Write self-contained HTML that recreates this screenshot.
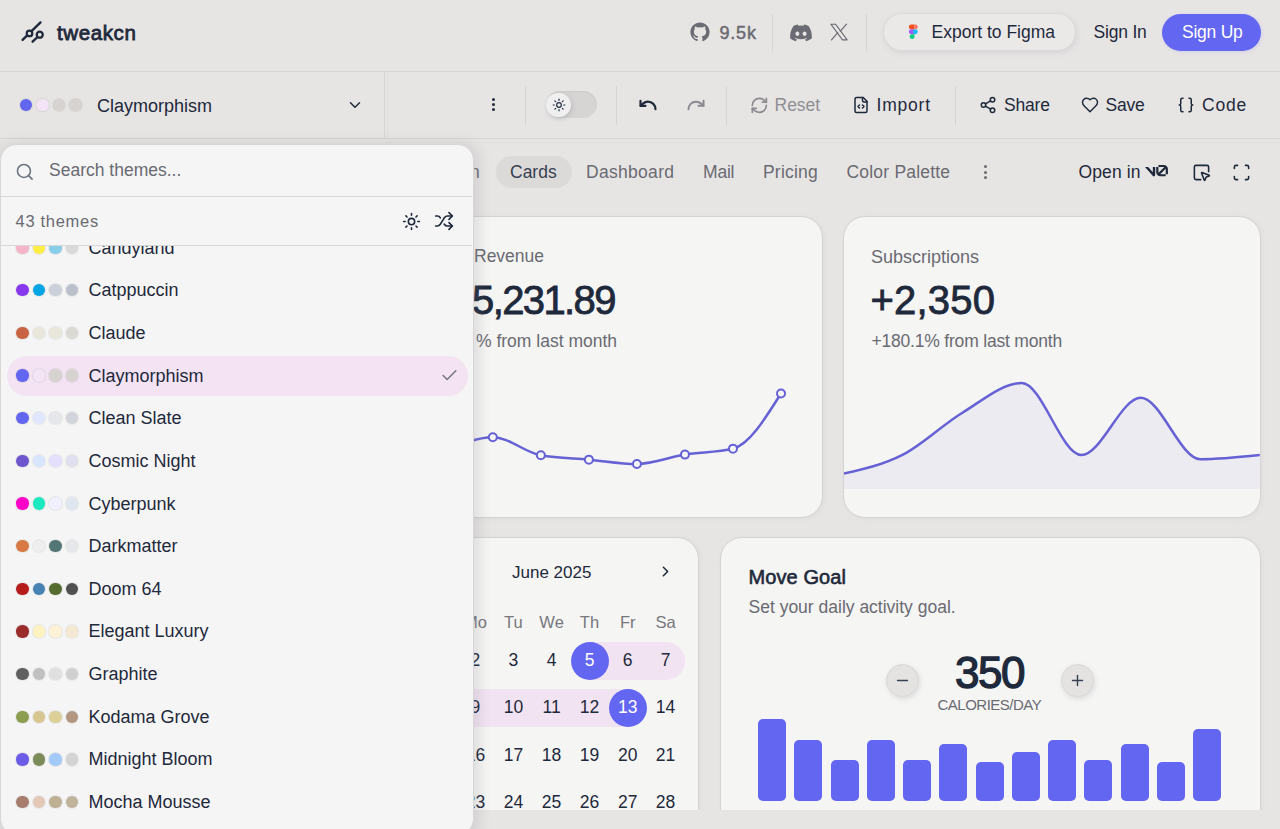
<!DOCTYPE html>
<html><head><meta charset="utf-8"><style>
html,body{margin:0;padding:0;}
body{width:1280px;height:829px;overflow:hidden;position:relative;background:#e7e5e4;font-family:"Liberation Sans", sans-serif;}
.t{position:absolute;line-height:1;white-space:nowrap;}
.dot{position:absolute;border-radius:50%;box-shadow:0 0 0 1px rgba(0,0,0,0.06);}
svg{overflow:visible}
</style></head><body>
<div style="position:absolute;left:0px;top:71px;width:1280px;height:1px;background:#d6d3d1"></div>
<svg style="position:absolute;left:0px;top:0px;" width="60" height="60" viewBox="0 0 60 60" fill="none"><g stroke="#1e293b" stroke-width="2.4" stroke-linecap="round"><line x1="22.6" y1="39.9" x2="40.5" y2="22.4"/><line x1="32.6" y1="41.7" x2="37" y2="37.5"/></g><circle cx="29.5" cy="33.4" r="2.8" stroke="#1e293b" stroke-width="2.2" fill="#e7e5e4"/><circle cx="39.75" cy="34.7" r="3" stroke="#1e293b" stroke-width="2.3" fill="#e7e5e4"/></svg>
<div class="t" style="left:57.0px;top:22.6px;font-size:20.5px;color:#1e293b;font-weight:400;letter-spacing:0.6px;-webkit-text-stroke:0.8px #1e293b">tweakcn</div>
<svg style="position:absolute;left:690px;top:22px;" width="20" height="20" viewBox="0 0 24 24" fill="none"><path fill="#6b6b73" d="M12 .5C5.65.5.5 5.65.5 12c0 5.08 3.29 9.39 7.86 10.91.58.1.79-.25.79-.56v-2c-3.2.7-3.87-1.37-3.87-1.37-.52-1.33-1.28-1.69-1.28-1.69-1.04-.71.08-.7.08-.7 1.15.08 1.76 1.18 1.76 1.18 1.03 1.76 2.69 1.25 3.35.96.1-.74.4-1.25.73-1.54-2.55-.29-5.24-1.28-5.24-5.68 0-1.26.45-2.28 1.18-3.09-.12-.29-.51-1.46.11-3.04 0 0 .97-.31 3.17 1.18a11 11 0 0 1 5.77 0c2.2-1.49 3.17-1.18 3.17-1.18.63 1.58.23 2.75.11 3.04.74.81 1.18 1.83 1.18 3.09 0 4.41-2.69 5.38-5.25 5.67.41.36.78 1.06.78 2.14v3.17c0 .31.21.67.8.56C20.21 21.38 23.5 17.08 23.5 12 23.5 5.65 18.35.5 12 .5z"/></svg>
<div class="t" style="left:719.5px;top:23.8px;font-size:18px;color:#6b6b73;font-weight:400;letter-spacing:0.8px;-webkit-text-stroke:0.5px #6b6b73">9.5k</div>
<div style="position:absolute;left:772px;top:14px;width:1px;height:37px;background:#d6d3d1"></div>
<svg style="position:absolute;left:788px;top:22px;" width="26" height="20" viewBox="0 0 24 22" fill="none"><path fill="#6b6b73" d="M20.32 4.37a19.8 19.8 0 0 0-4.89-1.52.07.07 0 0 0-.08.04c-.21.38-.44.86-.61 1.25a18.3 18.3 0 0 0-5.49 0 12.6 12.6 0 0 0-.62-1.25.08.08 0 0 0-.08-.04 19.7 19.7 0 0 0-4.88 1.52.07.07 0 0 0-.03.03C.53 9.05-.32 13.58.1 18.06a.08.08 0 0 0 .03.05 19.9 19.9 0 0 0 5.99 3.03.08.08 0 0 0 .08-.03c.46-.63.87-1.3 1.23-1.99a.08.08 0 0 0-.04-.11 13.1 13.1 0 0 1-1.87-.89.08.08 0 0 1-.01-.13l.37-.29a.07.07 0 0 1 .08-.01c3.93 1.79 8.18 1.79 12.07 0a.07.07 0 0 1 .08.01l.37.29a.08.08 0 0 1-.01.13 12.3 12.3 0 0 1-1.87.89.08.08 0 0 0-.04.11c.36.7.77 1.36 1.22 1.99a.08.08 0 0 0 .08.03 19.8 19.8 0 0 0 6-3.03.08.08 0 0 0 .03-.05c.5-5.18-.84-9.67-3.55-13.66a.06.06 0 0 0-.03-.03zM8.02 15.33c-1.18 0-2.16-1.09-2.16-2.42 0-1.33.96-2.42 2.16-2.42 1.21 0 2.18 1.1 2.16 2.42 0 1.33-.96 2.42-2.16 2.42zm7.97 0c-1.18 0-2.16-1.09-2.16-2.42 0-1.33.96-2.42 2.16-2.42 1.21 0 2.18 1.1 2.16 2.42 0 1.33-.95 2.42-2.16 2.42z"/></svg>
<svg style="position:absolute;left:829px;top:22px;" width="20" height="20" viewBox="0 0 24 24" fill="none"><path fill="none" stroke="#6b6b73" stroke-width="1.3" stroke-linejoin="round" d="M2.2 2.6h5.6l14 18.8h-5.6z"/><path stroke="#6b6b73" stroke-width="1.5" stroke-linecap="round" d="M21 2.6 13.6 11M3 21.4l7.5-8.6"/></svg>
<div style="position:absolute;left:866px;top:14px;width:1px;height:37px;background:#d6d3d1"></div>
<div style="position:absolute;left:884px;top:14px;width:191px;height:36px;border-radius:18px;background:#ebe9e8;box-shadow:0 0 0 1px #dcdad8, 1px 2px 6px rgba(140,140,150,0.25)"></div>
<svg style="position:absolute;left:908px;top:24.3px;" width="10.6" height="15.6" viewBox="0 0 13 18" fill="none"><path fill="#f24e1e" d="M4 0h4v6H4a3 3 0 0 1 0-6z"/><path fill="#ff7262" d="M8 0h1a3 3 0 0 1 0 6H8z"/><path fill="#a259ff" d="M4 6h4v6H4a3 3 0 0 1 0-6z"/><circle fill="#1abcfe" cx="9" cy="9" r="3"/><path fill="#0acf83" d="M4 12h4v3a3 3 0 1 1-4-3z"/></svg>
<div class="t" style="left:931.5px;top:23.8px;font-size:17.5px;color:#1e293b;font-weight:400;letter-spacing:0px;">Export to Figma</div>
<div class="t" style="left:1093.5px;top:23.8px;font-size:17.5px;color:#1e293b;font-weight:400;letter-spacing:-0.2px;">Sign In</div>
<div style="position:absolute;left:1162px;top:14px;width:99px;height:37px;border-radius:19px;background:#6366f1;box-shadow:1px 1px 4px rgba(99,102,241,0.15)"></div>
<div class="t" style="left:1182.0px;top:23.8px;font-size:17.5px;color:#ffffff;font-weight:400;letter-spacing:-0.25px;">Sign Up</div>
<div style="position:absolute;left:0px;top:138px;width:1280px;height:1px;background:#d6d3d1"></div>
<div style="position:absolute;left:385px;top:142px;width:895px;height:1px;background:#e2e0de"></div>
<div style="position:absolute;left:383.5px;top:72px;width:1px;height:66px;background:#d6d3d1"></div>
<div style="position:absolute;left:387px;top:72px;width:1px;height:66px;background:#dedcda"></div>
<div class="dot" style="left:19.7px;top:98.5px;width:12.6px;height:12.6px;background:#6366f1"></div>
<div class="dot" style="left:36.2px;top:98.5px;width:12.6px;height:12.6px;background:#f3e5f5"></div>
<div class="dot" style="left:52.7px;top:98.5px;width:12.6px;height:12.6px;background:#d6d3d1"></div>
<div class="dot" style="left:69.2px;top:98.5px;width:12.6px;height:12.6px;background:#d6d3d1"></div>
<div class="t" style="left:97.0px;top:96.8px;font-size:18px;color:#1e293b;font-weight:400;letter-spacing:0px;">Claymorphism</div>
<svg style="position:absolute;left:346px;top:96px" width="18" height="18" viewBox="0 0 24 24" fill="none" stroke="#1e293b" stroke-width="2" stroke-linecap="round" stroke-linejoin="round"><path d="m6 9 6 6 6-6"/></svg>
<div style="position:absolute;left:492px;top:97.9px;width:3.2px;height:3.2px;border-radius:50%;background:#1e293b"></div>
<div style="position:absolute;left:492px;top:102.9px;width:3.2px;height:3.2px;border-radius:50%;background:#1e293b"></div>
<div style="position:absolute;left:492px;top:107.9px;width:3.2px;height:3.2px;border-radius:50%;background:#1e293b"></div>
<div style="position:absolute;left:525px;top:86px;width:1px;height:39px;background:#d6d3d1"></div>
<div style="position:absolute;left:545.5px;top:91px;width:51.5px;height:27px;border-radius:14px;background:#d7d5d4;box-shadow:inset 0 1px 2px rgba(0,0,0,0.05)"></div>
<div style="position:absolute;left:546.2px;top:92.5px;width:24.5px;height:24.5px;border-radius:50%;background:#efefef;box-shadow:1px 2px 4px rgba(100,100,110,0.25)"></div>
<svg style="position:absolute;left:551.5px;top:97.8px" width="14" height="14" viewBox="0 0 24 24" fill="none" stroke="#1e293b" stroke-width="2" stroke-linecap="round" stroke-linejoin="round"><circle cx="12" cy="12" r="4"/><path d="M12 2v2"/><path d="M12 20v2"/><path d="m4.93 4.93 1.41 1.41"/><path d="m17.66 17.66 1.41 1.41"/><path d="M2 12h2"/><path d="M20 12h2"/><path d="m6.34 17.66-1.41 1.41"/><path d="m19.07 4.93-1.41 1.41"/></svg>
<div style="position:absolute;left:616px;top:86px;width:1px;height:39px;background:#d6d3d1"></div>
<svg style="position:absolute;left:638.3px;top:94.5px" width="20" height="20" viewBox="0 0 24 24" fill="none" stroke="#1e293b" stroke-width="2.6" stroke-linecap="round" stroke-linejoin="round"><path d="M3 7v6h6"/><path d="M21 17a9 9 0 0 0-9-9 9 9 0 0 0-6 2.3L3 13"/></svg>
<svg style="position:absolute;left:685.5px;top:94.5px" width="20" height="20" viewBox="0 0 24 24" fill="none" stroke="#8a8a8e" stroke-width="2.4" stroke-linecap="round" stroke-linejoin="round"><path d="M21 7v6h-6"/><path d="M3 17a9 9 0 0 1 9-9 9 9 0 0 1 6 2.3l3 2.7"/></svg>
<div style="position:absolute;left:726px;top:86px;width:1px;height:39px;background:#d6d3d1"></div>
<svg style="position:absolute;left:750.3px;top:95.5px" width="18.7" height="18.7" viewBox="0 0 24 24" fill="none" stroke="#8c8c90" stroke-width="2.2" stroke-linecap="round" stroke-linejoin="round"><path d="M3 12a9 9 0 0 1 9-9 9.75 9.75 0 0 1 6.74 2.74L21 8"/><path d="M21 3v5h-5"/><path d="M21 12a9 9 0 0 1-9 9 9.75 9.75 0 0 1-6.74-2.74L3 16"/><path d="M8 16H3v5"/></svg>
<div class="t" style="left:774.5px;top:97.2px;font-size:17.5px;color:#8f8f93;font-weight:400;letter-spacing:0px;">Reset</div>
<svg style="position:absolute;left:852px;top:96px" width="18" height="18" viewBox="0 0 24 24" fill="none" stroke="#1e293b" stroke-width="2" stroke-linecap="round" stroke-linejoin="round"><path d="M15 2H6a2 2 0 0 0-2 2v16a2 2 0 0 0 2 2h12a2 2 0 0 0 2-2V7Z"/><path d="M14 2v4a2 2 0 0 0 2 2h4"/><path d="m10 12-2 2 2 2"/><path d="m14 12 2 2-2 2"/></svg>
<div class="t" style="left:876.5px;top:97.2px;font-size:17.5px;color:#1e293b;font-weight:400;letter-spacing:0.8px;">Import</div>
<div style="position:absolute;left:955px;top:86px;width:1px;height:39px;background:#d6d3d1"></div>
<svg style="position:absolute;left:979px;top:96px" width="18" height="18" viewBox="0 0 24 24" fill="none" stroke="#1e293b" stroke-width="2" stroke-linecap="round" stroke-linejoin="round"><circle cx="18" cy="5" r="3"/><circle cx="6" cy="12" r="3"/><circle cx="18" cy="19" r="3"/><line x1="8.59" x2="15.42" y1="13.51" y2="17.49"/><line x1="15.41" x2="8.59" y1="6.51" y2="10.49"/></svg>
<div class="t" style="left:1004.0px;top:97.2px;font-size:17.5px;color:#1e293b;font-weight:400;letter-spacing:-0.2px;">Share</div>
<svg style="position:absolute;left:1081px;top:96px" width="18" height="18" viewBox="0 0 24 24" fill="none" stroke="#1e293b" stroke-width="2" stroke-linecap="round" stroke-linejoin="round"><path d="M19 14c1.49-1.46 3-3.21 3-5.5A5.5 5.5 0 0 0 16.5 3c-1.76 0-3 .5-4.5 2-1.5-1.5-2.74-2-4.5-2A5.5 5.5 0 0 0 2 8.5c0 2.3 1.5 4.05 3 5.5l7 7Z"/></svg>
<div class="t" style="left:1105.5px;top:97.2px;font-size:17.5px;color:#1e293b;font-weight:400;letter-spacing:-0.2px;">Save</div>
<svg style="position:absolute;left:1177px;top:96px" width="18" height="18" viewBox="0 0 24 24" fill="none" stroke="#1e293b" stroke-width="2" stroke-linecap="round" stroke-linejoin="round"><path d="M8 3H7a2 2 0 0 0-2 2v5a2 2 0 0 1-2 2 2 2 0 0 1 2 2v5c0 1.1.9 2 2 2h1"/><path d="M16 21h1a2 2 0 0 0 2-2v-5c0-1.1.9-2 2-2a2 2 0 0 1-2-2V5a2 2 0 0 0-2-2h-1"/></svg>
<div class="t" style="left:1202.0px;top:97.2px;font-size:17.5px;color:#1e293b;font-weight:400;letter-spacing:0.8px;">Code</div>
<div style="position:absolute;left:496px;top:156px;width:76px;height:32px;border-radius:16px;background:#dcdad9"></div>
<div class="t" style="left:470.0px;top:163.9px;font-size:17.5px;color:#6a6a72;font-weight:400;letter-spacing:0px;">n</div>
<div class="t" style="left:510.0px;top:163.9px;font-size:17.5px;color:#374151;font-weight:400;letter-spacing:0px;">Cards</div>
<div class="t" style="left:586.0px;top:163.9px;font-size:17.5px;color:#6a6a72;font-weight:400;letter-spacing:0.3px;">Dashboard</div>
<div class="t" style="left:703.0px;top:163.9px;font-size:17.5px;color:#6a6a72;font-weight:400;letter-spacing:-0.2px;">Mail</div>
<div class="t" style="left:763.0px;top:163.9px;font-size:17.5px;color:#6a6a72;font-weight:400;letter-spacing:0.2px;">Pricing</div>
<div class="t" style="left:846.5px;top:163.9px;font-size:17.5px;color:#6a6a72;font-weight:400;letter-spacing:0.2px;">Color Palette</div>
<div style="position:absolute;left:983.5px;top:165.0px;width:3px;height:3px;border-radius:50%;background:#6a6a72"></div>
<div style="position:absolute;left:983.5px;top:170.5px;width:3px;height:3px;border-radius:50%;background:#6a6a72"></div>
<div style="position:absolute;left:983.5px;top:176.0px;width:3px;height:3px;border-radius:50%;background:#6a6a72"></div>
<div class="t" style="left:1078.5px;top:163.9px;font-size:17.5px;color:#1e293b;font-weight:400;letter-spacing:0.1px;">Open in</div>
<svg style="position:absolute;left:1145px;top:165px;" width="23" height="11.5" viewBox="0 0 40 20" fill="none"><path fill="#1e293b" d="M23.3919 0H32.9188C36.7819 0 39.9136 3.13165 39.9136 6.99475V16.0805H36.0006V6.99475C36.0006 6.90167 35.9969 6.80925 35.9898 6.71766L26.4628 16.079C26.4949 16.08 26.5272 16.0805 26.5595 16.0805H36.0006V19.7762H26.5595C22.6964 19.7762 19.4788 16.6139 19.4788 12.7508V3.68923H23.3919V12.7508C23.3919 12.9253 23.4054 13.0977 23.4316 13.2668L33.1682 3.6995C33.0861 3.6927 33.003 3.68923 32.9188 3.68923H23.3919V0Z"/><path fill="#1e293b" d="M13.7688 19.0956L0 3.68759H5.53933L13.6231 12.7337V3.68759H17.7535V17.5746C17.7535 19.6705 15.1654 20.6584 13.7688 19.0956Z"/></svg>
<svg style="position:absolute;left:1192.2px;top:163px" width="19" height="19" viewBox="0 0 24 24" fill="none" stroke="#1e293b" stroke-width="2" stroke-linecap="round" stroke-linejoin="round"><path d="M12.034 12.681a.498.498 0 0 1 .647-.647l9 3.5a.5.5 0 0 1-.033.943l-3.444 1.068a1 1 0 0 0-.66.66l-1.067 3.443a.5.5 0 0 1-.943.033z"/><path d="M21 11V5a2 2 0 0 0-2-2H5a2 2 0 0 0-2 2v14a2 2 0 0 0 2 2h6"/></svg>
<svg style="position:absolute;left:1232.3px;top:163px" width="19" height="19" viewBox="0 0 24 24" fill="none" stroke="#1e293b" stroke-width="2" stroke-linecap="round" stroke-linejoin="round"><path d="M3 7V5a2 2 0 0 1 2-2h2"/><path d="M17 3h2a2 2 0 0 1 2 2v2"/><path d="M21 17v2a2 2 0 0 1-2 2h-2"/><path d="M7 21H5a2 2 0 0 1-2-2v-2"/></svg>
<div style="position:absolute;left:300px;top:216px;width:523px;height:302px;background:#f5f5f4;border:1px solid #d5d3d1;border-radius:22px;box-sizing:border-box;box-shadow:1px 1px 4px rgba(148,148,160,0.10)"></div>
<div class="t" style="left:474.0px;top:248.2px;font-size:17.5px;color:#6a6a72;font-weight:400;letter-spacing:0px;">Revenue</div>
<div class="t" style="left:472.0px;top:280.3px;font-size:40px;color:#1e293b;font-weight:400;letter-spacing:-1.6px;-webkit-text-stroke:0.8px #1e293b">5,231.89</div>
<div class="t" style="left:476.0px;top:333.4px;font-size:17.5px;color:#6a6a72;font-weight:400;letter-spacing:0px;">% from last month</div>
<svg style="position:absolute;left:0px;top:0px;" width="1280" height="829" viewBox="0 0 1280 829" fill="none"><path d="M444.80,451.69 C460.81,444.44 476.82,437.19 492.83,437.19 C508.84,437.19 524.85,452.42 540.86,455.31 C556.87,458.21 572.88,458.21 588.89,459.66 C604.90,461.10 620.91,464.00 636.92,464.00 C652.93,464.00 668.94,457.15 684.95,454.59 C700.96,452.03 716.97,452.60 732.98,448.64 C748.99,444.67 765.00,419.08 781.01,393.50" stroke="#6661d4" stroke-width="2.5" fill="none"/><circle cx="492.83" cy="437.19" r="4" fill="#f5f5f4" stroke="#6661d4" stroke-width="2"/><circle cx="540.86" cy="455.31" r="4" fill="#f5f5f4" stroke="#6661d4" stroke-width="2"/><circle cx="588.89" cy="459.66" r="4" fill="#f5f5f4" stroke="#6661d4" stroke-width="2"/><circle cx="636.92" cy="464.00" r="4" fill="#f5f5f4" stroke="#6661d4" stroke-width="2"/><circle cx="684.95" cy="454.59" r="4" fill="#f5f5f4" stroke="#6661d4" stroke-width="2"/><circle cx="732.98" cy="448.64" r="4" fill="#f5f5f4" stroke="#6661d4" stroke-width="2"/><circle cx="781.01" cy="393.50" r="4" fill="#f5f5f4" stroke="#6661d4" stroke-width="2"/></svg>
<div style="position:absolute;left:843px;top:216px;width:418px;height:302px;background:#f5f5f4;border:1px solid #d5d3d1;border-radius:22px;box-sizing:border-box;box-shadow:1px 1px 4px rgba(148,148,160,0.10);overflow:hidden"></div>
<div class="t" style="left:871.0px;top:247.8px;font-size:18px;color:#6a6a72;font-weight:400;letter-spacing:0px;">Subscriptions</div>
<div class="t" style="left:870.5px;top:280.3px;font-size:40px;color:#1e293b;font-weight:400;letter-spacing:0.2px;-webkit-text-stroke:0.8px #1e293b">+2,350</div>
<div class="t" style="left:871.5px;top:333.4px;font-size:17.5px;color:#6a6a72;font-weight:400;letter-spacing:-0.2px;">+180.1% from last month</div>
<svg style="position:absolute;left:0px;top:0px;" width="1280" height="829" viewBox="0 0 1280 829" fill="none"><clipPath id="cs"><rect x="844" y="217" width="416" height="300" rx="21"/></clipPath><g clip-path="url(#cs)"><path d="M843.50,473.66 C863.32,469.21 883.14,464.77 902.96,454.61 C922.78,444.45 942.60,424.64 962.42,412.70 C982.24,400.76 1002.06,382.98 1021.88,382.98 C1041.70,382.98 1061.52,454.99 1081.34,454.99 C1101.16,454.99 1120.98,397.84 1140.80,397.84 C1160.62,397.84 1180.44,459.18 1200.26,459.18 C1220.08,459.18 1239.90,457.09 1259.72,454.99 L1260,489 L843,489 Z" fill="#ecebf2"/><path d="M843.50,473.66 C863.32,469.21 883.14,464.77 902.96,454.61 C922.78,444.45 942.60,424.64 962.42,412.70 C982.24,400.76 1002.06,382.98 1021.88,382.98 C1041.70,382.98 1061.52,454.99 1081.34,454.99 C1101.16,454.99 1120.98,397.84 1140.80,397.84 C1160.62,397.84 1180.44,459.18 1200.26,459.18 C1220.08,459.18 1239.90,457.09 1259.72,454.99" stroke="#6661d4" stroke-width="2.5" fill="none"/></g></svg>
<div style="position:absolute;left:300px;top:537px;width:399px;height:300px;background:#f5f5f4;border:1px solid #d5d3d1;border-radius:22px;box-sizing:border-box;box-shadow:1px 1px 4px rgba(148,148,160,0.10)"></div>
<div class="t" style="left:512.0px;top:563.6px;font-size:17px;color:#1e293b;font-weight:400;letter-spacing:0px;">June 2025</div>
<svg style="position:absolute;left:657px;top:563px" width="17" height="17" viewBox="0 0 24 24" fill="none" stroke="#1e293b" stroke-width="2.2" stroke-linecap="round" stroke-linejoin="round"><path d="m9 18 6-6-6-6"/></svg>
<div class="t" style="left:475.4px;top:614.0px;font-size:16.5px;color:#77777d;font-weight:400;letter-spacing:0px;transform:translateX(-50%)">Mo</div>
<div class="t" style="left:513.4px;top:614.0px;font-size:16.5px;color:#77777d;font-weight:400;letter-spacing:0px;transform:translateX(-50%)">Tu</div>
<div class="t" style="left:551.6px;top:614.0px;font-size:16.5px;color:#77777d;font-weight:400;letter-spacing:0px;transform:translateX(-50%)">We</div>
<div class="t" style="left:589.5px;top:614.0px;font-size:16.5px;color:#77777d;font-weight:400;letter-spacing:0px;transform:translateX(-50%)">Th</div>
<div class="t" style="left:627.7px;top:614.0px;font-size:16.5px;color:#77777d;font-weight:400;letter-spacing:0px;transform:translateX(-50%)">Fr</div>
<div class="t" style="left:665.6px;top:614.0px;font-size:16.5px;color:#77777d;font-weight:400;letter-spacing:0px;transform:translateX(-50%)">Sa</div>
<div style="position:absolute;left:589.5px;top:641.5px;width:95px;height:38px;border-radius:0 19px 19px 0;background:#f2e3f2"></div>
<div style="position:absolute;left:420px;top:689px;width:208px;height:38px;background:#f2e3f2"></div>
<div style="position:absolute;left:570.5px;top:641.5px;width:38px;height:38px;border-radius:50%;background:#6366f1"></div>
<div style="position:absolute;left:608.5px;top:689px;width:38px;height:38px;border-radius:50%;background:#6366f1"></div>
<div class="t" style="left:475.4px;top:651.9px;font-size:17.5px;color:#1e293b;font-weight:400;letter-spacing:0px;transform:translateX(-50%);text-align:center">2</div>
<div class="t" style="left:513.4px;top:651.9px;font-size:17.5px;color:#1e293b;font-weight:400;letter-spacing:0px;transform:translateX(-50%);text-align:center">3</div>
<div class="t" style="left:551.6px;top:651.9px;font-size:17.5px;color:#1e293b;font-weight:400;letter-spacing:0px;transform:translateX(-50%);text-align:center">4</div>
<div class="t" style="left:589.5px;top:651.9px;font-size:17.5px;color:#ffffff;font-weight:400;letter-spacing:0px;transform:translateX(-50%);text-align:center">5</div>
<div class="t" style="left:627.7px;top:651.9px;font-size:17.5px;color:#1e293b;font-weight:400;letter-spacing:0px;transform:translateX(-50%);text-align:center">6</div>
<div class="t" style="left:665.6px;top:651.9px;font-size:17.5px;color:#1e293b;font-weight:400;letter-spacing:0px;transform:translateX(-50%);text-align:center">7</div>
<div class="t" style="left:475.4px;top:699.2px;font-size:17.5px;color:#1e293b;font-weight:400;letter-spacing:0px;transform:translateX(-50%);text-align:center">9</div>
<div class="t" style="left:513.4px;top:699.2px;font-size:17.5px;color:#1e293b;font-weight:400;letter-spacing:0px;transform:translateX(-50%);text-align:center">10</div>
<div class="t" style="left:551.6px;top:699.2px;font-size:17.5px;color:#1e293b;font-weight:400;letter-spacing:0px;transform:translateX(-50%);text-align:center">11</div>
<div class="t" style="left:589.5px;top:699.2px;font-size:17.5px;color:#1e293b;font-weight:400;letter-spacing:0px;transform:translateX(-50%);text-align:center">12</div>
<div class="t" style="left:627.7px;top:699.2px;font-size:17.5px;color:#ffffff;font-weight:400;letter-spacing:0px;transform:translateX(-50%);text-align:center">13</div>
<div class="t" style="left:665.6px;top:699.2px;font-size:17.5px;color:#1e293b;font-weight:400;letter-spacing:0px;transform:translateX(-50%);text-align:center">14</div>
<div class="t" style="left:475.4px;top:746.8px;font-size:17.5px;color:#1e293b;font-weight:400;letter-spacing:0px;transform:translateX(-50%);text-align:center">16</div>
<div class="t" style="left:513.4px;top:746.8px;font-size:17.5px;color:#1e293b;font-weight:400;letter-spacing:0px;transform:translateX(-50%);text-align:center">17</div>
<div class="t" style="left:551.6px;top:746.8px;font-size:17.5px;color:#1e293b;font-weight:400;letter-spacing:0px;transform:translateX(-50%);text-align:center">18</div>
<div class="t" style="left:589.5px;top:746.8px;font-size:17.5px;color:#1e293b;font-weight:400;letter-spacing:0px;transform:translateX(-50%);text-align:center">19</div>
<div class="t" style="left:627.7px;top:746.8px;font-size:17.5px;color:#1e293b;font-weight:400;letter-spacing:0px;transform:translateX(-50%);text-align:center">20</div>
<div class="t" style="left:665.6px;top:746.8px;font-size:17.5px;color:#1e293b;font-weight:400;letter-spacing:0px;transform:translateX(-50%);text-align:center">21</div>
<div class="t" style="left:475.4px;top:793.7px;font-size:17.5px;color:#1e293b;font-weight:400;letter-spacing:0px;transform:translateX(-50%);text-align:center">23</div>
<div class="t" style="left:513.4px;top:793.7px;font-size:17.5px;color:#1e293b;font-weight:400;letter-spacing:0px;transform:translateX(-50%);text-align:center">24</div>
<div class="t" style="left:551.6px;top:793.7px;font-size:17.5px;color:#1e293b;font-weight:400;letter-spacing:0px;transform:translateX(-50%);text-align:center">25</div>
<div class="t" style="left:589.5px;top:793.7px;font-size:17.5px;color:#1e293b;font-weight:400;letter-spacing:0px;transform:translateX(-50%);text-align:center">26</div>
<div class="t" style="left:627.7px;top:793.7px;font-size:17.5px;color:#1e293b;font-weight:400;letter-spacing:0px;transform:translateX(-50%);text-align:center">27</div>
<div class="t" style="left:665.6px;top:793.7px;font-size:17.5px;color:#1e293b;font-weight:400;letter-spacing:0px;transform:translateX(-50%);text-align:center">28</div>
<div style="position:absolute;left:720px;top:537px;width:541px;height:300px;background:#f5f5f4;border:1px solid #d5d3d1;border-radius:22px;box-sizing:border-box;box-shadow:1px 1px 4px rgba(148,148,160,0.10)"></div>
<div class="t" style="left:748.5px;top:566.9px;font-size:20px;color:#1e293b;font-weight:400;letter-spacing:0.1px;-webkit-text-stroke:0.6px #1e293b">Move Goal</div>
<div class="t" style="left:748.5px;top:598.8px;font-size:17.5px;color:#6a6a72;font-weight:400;letter-spacing:0px;">Set your daily activity goal.</div>
<div style="position:absolute;left:886px;top:664px;width:33px;height:33px;border-radius:50%;background:#e5e3e2;border:1px solid #dad8d6;box-sizing:border-box;box-shadow:1px 2px 5px rgba(120,120,130,0.2)"></div>
<div style="position:absolute;left:1061px;top:664px;width:33px;height:33px;border-radius:50%;background:#e5e3e2;border:1px solid #dad8d6;box-sizing:border-box;box-shadow:1px 2px 5px rgba(120,120,130,0.2)"></div>
<svg style="position:absolute;left:894px;top:672px" width="17" height="17" viewBox="0 0 24 24" fill="none" stroke="#374151" stroke-width="2" stroke-linecap="round" stroke-linejoin="round"><path d="M5 12h14"/></svg>
<svg style="position:absolute;left:1069px;top:672px" width="17" height="17" viewBox="0 0 24 24" fill="none" stroke="#374151" stroke-width="2" stroke-linecap="round" stroke-linejoin="round"><path d="M5 12h14"/><path d="M12 5v14"/></svg>
<div class="t" style="left:955.0px;top:651.3px;font-size:44px;color:#1e293b;font-weight:400;letter-spacing:-1.5px;-webkit-text-stroke:1.3px #1e293b">350</div>
<div class="t" style="left:937.5px;top:697.3px;font-size:15px;color:#6a6a72;font-weight:400;letter-spacing:-0.5px;">CALORIES/DAY</div>
<div style="position:absolute;left:758.0px;top:719px;width:28px;height:82px;border-radius:5px;background:#6366f1"></div>
<div style="position:absolute;left:794.2px;top:739.8px;width:28px;height:61.200000000000045px;border-radius:5px;background:#6366f1"></div>
<div style="position:absolute;left:830.5px;top:760.2px;width:28px;height:40.799999999999955px;border-radius:5px;background:#6366f1"></div>
<div style="position:absolute;left:866.8px;top:739.8px;width:28px;height:61.200000000000045px;border-radius:5px;background:#6366f1"></div>
<div style="position:absolute;left:903.0px;top:760.2px;width:28px;height:40.799999999999955px;border-radius:5px;background:#6366f1"></div>
<div style="position:absolute;left:939.2px;top:743.9px;width:28px;height:57.10000000000002px;border-radius:5px;background:#6366f1"></div>
<div style="position:absolute;left:975.5px;top:762.4px;width:28px;height:38.60000000000002px;border-radius:5px;background:#6366f1"></div>
<div style="position:absolute;left:1011.8px;top:752px;width:28px;height:49px;border-radius:5px;background:#6366f1"></div>
<div style="position:absolute;left:1048.0px;top:739.8px;width:28px;height:61.200000000000045px;border-radius:5px;background:#6366f1"></div>
<div style="position:absolute;left:1084.2px;top:760.2px;width:28px;height:40.799999999999955px;border-radius:5px;background:#6366f1"></div>
<div style="position:absolute;left:1120.5px;top:743.9px;width:28px;height:57.10000000000002px;border-radius:5px;background:#6366f1"></div>
<div style="position:absolute;left:1156.8px;top:762.4px;width:28px;height:38.60000000000002px;border-radius:5px;background:#6366f1"></div>
<div style="position:absolute;left:1193.0px;top:729.4px;width:28px;height:71.60000000000002px;border-radius:5px;background:#6366f1"></div>
<div style="position:absolute;left:385px;top:810px;width:895px;height:19px;background:#e7e5e4"></div>
<div style="position:absolute;left:0;top:143.5px;width:474px;height:691.5px;background:#f5f5f5;border:1px solid #d9d7d5;box-sizing:border-box;border-radius:16px;box-shadow:2px 2px 12px 4px rgba(120,120,130,0.18);overflow:hidden">
</div>
<svg style="position:absolute;left:14.8px;top:161.5px" width="19.5" height="19.5" viewBox="0 0 24 24" fill="none" stroke="#6b7280" stroke-width="2" stroke-linecap="round" stroke-linejoin="round"><circle cx="11" cy="11" r="8"/><path d="m21 21-4.3-4.3"/></svg>
<div class="t" style="left:49.0px;top:161.7px;font-size:17.5px;color:#6a6a72;font-weight:400;letter-spacing:0px;">Search themes...</div>
<div style="position:absolute;left:1px;top:196px;width:471px;height:1px;background:#d9d7d5"></div>
<div class="t" style="left:15.5px;top:213.0px;font-size:16.5px;color:#6a6a72;font-weight:400;letter-spacing:0.7px;">43 themes</div>
<svg style="position:absolute;left:401.6px;top:212px" width="19" height="19" viewBox="0 0 24 24" fill="none" stroke="#1e293b" stroke-width="2" stroke-linecap="round" stroke-linejoin="round"><circle cx="12" cy="12" r="4"/><path d="M12 2v2"/><path d="M12 20v2"/><path d="m4.93 4.93 1.41 1.41"/><path d="m17.66 17.66 1.41 1.41"/><path d="M2 12h2"/><path d="M20 12h2"/><path d="m6.34 17.66-1.41 1.41"/><path d="m19.07 4.93-1.41 1.41"/></svg>
<svg style="position:absolute;left:434px;top:211px" width="20" height="20" viewBox="0 0 24 24" fill="none" stroke="#1e293b" stroke-width="2" stroke-linecap="round" stroke-linejoin="round"><path d="m18 14 4 4-4 4"/><path d="m18 2 4 4-4 4"/><path d="M2 18h1.973a4 4 0 0 0 3.3-1.7l5.454-8.6a4 4 0 0 1 3.3-1.7H22"/><path d="M2 6h1.972a4 4 0 0 1 3.6 2.2"/><path d="M22 18h-6.041a4 4 0 0 1-3.3-1.8l-.359-.45"/></svg>
<div style="position:absolute;left:1px;top:245px;width:471px;height:1px;background:#d9d7d5"></div>
<div style="position:absolute;left:1px;top:246px;width:471px;height:583px;overflow:hidden">
<div class="dot" style="left:15.2px;top:-4.5px;width:12.4px;height:12.4px;background:#f5b5c8"></div>
<div class="dot" style="left:31.8px;top:-4.5px;width:12.4px;height:12.4px;background:#ffee44"></div>
<div class="dot" style="left:48.4px;top:-4.5px;width:12.4px;height:12.4px;background:#87ceeb"></div>
<div class="dot" style="left:65.0px;top:-4.5px;width:12.4px;height:12.4px;background:#d9d9d9"></div>
<div class="t" style="left:87.5px;top:-7.3px;font-size:18px;color:#1e293b">Candyland</div>
<div class="dot" style="left:15.2px;top:38.1px;width:12.4px;height:12.4px;background:#8839ef"></div>
<div class="dot" style="left:31.8px;top:38.1px;width:12.4px;height:12.4px;background:#04a5e5"></div>
<div class="dot" style="left:48.4px;top:38.1px;width:12.4px;height:12.4px;background:#ccd0da"></div>
<div class="dot" style="left:65.0px;top:38.1px;width:12.4px;height:12.4px;background:#bcc0cc"></div>
<div class="t" style="left:87.5px;top:35.3px;font-size:18px;color:#1e293b">Catppuccin</div>
<div class="dot" style="left:15.2px;top:80.8px;width:12.4px;height:12.4px;background:#c96442"></div>
<div class="dot" style="left:31.8px;top:80.8px;width:12.4px;height:12.4px;background:#e9e6dc"></div>
<div class="dot" style="left:48.4px;top:80.8px;width:12.4px;height:12.4px;background:#e9e6dc"></div>
<div class="dot" style="left:65.0px;top:80.8px;width:12.4px;height:12.4px;background:#dad9d4"></div>
<div class="t" style="left:87.5px;top:77.9px;font-size:18px;color:#1e293b">Claude</div>
<div style="position:absolute;left:6px;top:109.5px;width:461px;height:40.5px;border-radius:20px;background:#f3e3f3"></div>
<svg style="position:absolute;left:439px;top:120px" width="19" height="19" viewBox="0 0 24 24" fill="none" stroke="#75757d" stroke-width="1.9" stroke-linecap="round" stroke-linejoin="round"><path d="M20 6 9 17l-5-5"/></svg>
<div class="dot" style="left:15.2px;top:123.4px;width:12.4px;height:12.4px;background:#6366f1"></div>
<div class="dot" style="left:31.8px;top:123.4px;width:12.4px;height:12.4px;background:#f3e5f5"></div>
<div class="dot" style="left:48.4px;top:123.4px;width:12.4px;height:12.4px;background:#d6d3d1"></div>
<div class="dot" style="left:65.0px;top:123.4px;width:12.4px;height:12.4px;background:#d6d3d1"></div>
<div class="t" style="left:87.5px;top:120.6px;font-size:18px;color:#1e293b">Claymorphism</div>
<div class="dot" style="left:15.2px;top:166.1px;width:12.4px;height:12.4px;background:#6366f1"></div>
<div class="dot" style="left:31.8px;top:166.1px;width:12.4px;height:12.4px;background:#e0e7ff"></div>
<div class="dot" style="left:48.4px;top:166.1px;width:12.4px;height:12.4px;background:#e5e7eb"></div>
<div class="dot" style="left:65.0px;top:166.1px;width:12.4px;height:12.4px;background:#d1d5db"></div>
<div class="t" style="left:87.5px;top:163.2px;font-size:18px;color:#1e293b">Clean Slate</div>
<div class="dot" style="left:15.2px;top:208.7px;width:12.4px;height:12.4px;background:#6e56cf"></div>
<div class="dot" style="left:31.8px;top:208.7px;width:12.4px;height:12.4px;background:#d8e6ff"></div>
<div class="dot" style="left:48.4px;top:208.7px;width:12.4px;height:12.4px;background:#e4dfff"></div>
<div class="dot" style="left:65.0px;top:208.7px;width:12.4px;height:12.4px;background:#e0e0f0"></div>
<div class="t" style="left:87.5px;top:205.9px;font-size:18px;color:#1e293b">Cosmic Night</div>
<div class="dot" style="left:15.2px;top:251.3px;width:12.4px;height:12.4px;background:#ff00c8"></div>
<div class="dot" style="left:31.8px;top:251.3px;width:12.4px;height:12.4px;background:#1de9c0"></div>
<div class="dot" style="left:48.4px;top:251.3px;width:12.4px;height:12.4px;background:#f0f0ff"></div>
<div class="dot" style="left:65.0px;top:251.3px;width:12.4px;height:12.4px;background:#dfe6f0"></div>
<div class="t" style="left:87.5px;top:248.5px;font-size:18px;color:#1e293b">Cyberpunk</div>
<div class="dot" style="left:15.2px;top:294.0px;width:12.4px;height:12.4px;background:#d87943"></div>
<div class="dot" style="left:31.8px;top:294.0px;width:12.4px;height:12.4px;background:#eeeeee"></div>
<div class="dot" style="left:48.4px;top:294.0px;width:12.4px;height:12.4px;background:#527575"></div>
<div class="dot" style="left:65.0px;top:294.0px;width:12.4px;height:12.4px;background:#e5e7eb"></div>
<div class="t" style="left:87.5px;top:291.1px;font-size:18px;color:#1e293b">Darkmatter</div>
<div class="dot" style="left:15.2px;top:336.6px;width:12.4px;height:12.4px;background:#b71c1c"></div>
<div class="dot" style="left:31.8px;top:336.6px;width:12.4px;height:12.4px;background:#4682b4"></div>
<div class="dot" style="left:48.4px;top:336.6px;width:12.4px;height:12.4px;background:#556b2f"></div>
<div class="dot" style="left:65.0px;top:336.6px;width:12.4px;height:12.4px;background:#505050"></div>
<div class="t" style="left:87.5px;top:333.8px;font-size:18px;color:#1e293b">Doom 64</div>
<div class="dot" style="left:15.2px;top:379.3px;width:12.4px;height:12.4px;background:#9b2c2c"></div>
<div class="dot" style="left:31.8px;top:379.3px;width:12.4px;height:12.4px;background:#fdf2c0"></div>
<div class="dot" style="left:48.4px;top:379.3px;width:12.4px;height:12.4px;background:#fdf2d6"></div>
<div class="dot" style="left:65.0px;top:379.3px;width:12.4px;height:12.4px;background:#f5e8d0"></div>
<div class="t" style="left:87.5px;top:376.4px;font-size:18px;color:#1e293b">Elegant Luxury</div>
<div class="dot" style="left:15.2px;top:421.9px;width:12.4px;height:12.4px;background:#606060"></div>
<div class="dot" style="left:31.8px;top:421.9px;width:12.4px;height:12.4px;background:#c0c0c0"></div>
<div class="dot" style="left:48.4px;top:421.9px;width:12.4px;height:12.4px;background:#e0e0e0"></div>
<div class="dot" style="left:65.0px;top:421.9px;width:12.4px;height:12.4px;background:#d0d0d0"></div>
<div class="t" style="left:87.5px;top:419.1px;font-size:18px;color:#1e293b">Graphite</div>
<div class="dot" style="left:15.2px;top:464.5px;width:12.4px;height:12.4px;background:#8d9d4f"></div>
<div class="dot" style="left:31.8px;top:464.5px;width:12.4px;height:12.4px;background:#d8c690"></div>
<div class="dot" style="left:48.4px;top:464.5px;width:12.4px;height:12.4px;background:#dccf98"></div>
<div class="dot" style="left:65.0px;top:464.5px;width:12.4px;height:12.4px;background:#b19681"></div>
<div class="t" style="left:87.5px;top:461.7px;font-size:18px;color:#1e293b">Kodama Grove</div>
<div class="dot" style="left:15.2px;top:507.2px;width:12.4px;height:12.4px;background:#6c5ce7"></div>
<div class="dot" style="left:31.8px;top:507.2px;width:12.4px;height:12.4px;background:#7d8b5a"></div>
<div class="dot" style="left:48.4px;top:507.2px;width:12.4px;height:12.4px;background:#a3c9f9"></div>
<div class="dot" style="left:65.0px;top:507.2px;width:12.4px;height:12.4px;background:#d4d4d4"></div>
<div class="t" style="left:87.5px;top:504.3px;font-size:18px;color:#1e293b">Midnight Bloom</div>
<div class="dot" style="left:15.2px;top:549.8px;width:12.4px;height:12.4px;background:#a67c6d"></div>
<div class="dot" style="left:31.8px;top:549.8px;width:12.4px;height:12.4px;background:#e3c8b8"></div>
<div class="dot" style="left:48.4px;top:549.8px;width:12.4px;height:12.4px;background:#bfb094"></div>
<div class="dot" style="left:65.0px;top:549.8px;width:12.4px;height:12.4px;background:#c0b39c"></div>
<div class="t" style="left:87.5px;top:547.0px;font-size:18px;color:#1e293b">Mocha Mousse</div>
</div>
</body></html>
